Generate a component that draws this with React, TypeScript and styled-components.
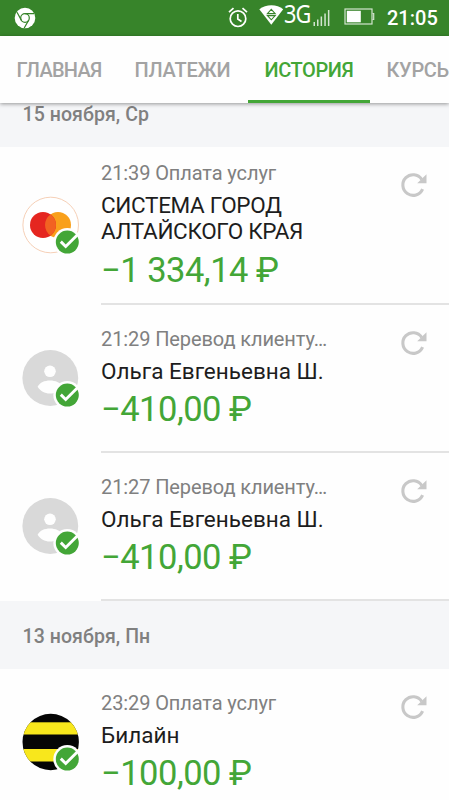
import React from "react";
import styled, { createGlobalStyle } from "styled-components";

const GlobalStyle = createGlobalStyle`
  * { box-sizing: border-box; }
  html, body { margin: 0; padding: 0; background: #fefefe; }
  body { font-family: Roboto, "Noto Sans", sans-serif; }
`;

const Screen = styled.div`
  width: 449px;
  height: 800px;
  overflow: hidden;
  display: flex;
  flex-direction: column;
  background: #fefefe;
`;

const StatusBar = styled.header`
  flex: none;
  height: 35.5px;
  background: #37842a;
  color: #fff;
  display: flex;
  align-items: flex-start;
  padding-left: 14px;
  svg { display: block; flex: none; }
`;

const StatusIcon = styled.span<{ $top: number; $left?: number }>`
  margin-top: ${(p) => p.$top}px;
  margin-left: ${(p) => p.$left ?? 0}px;
`;

const Spacer = styled.span`
  flex: 1;
`;

const NetworkLabel = styled.span`
  width: 31px;
  margin: -4px -3px 0 0;
  font: 400 25px/35px "Noto Sans", "Open Sans", sans-serif;
  letter-spacing: -1px;
  white-space: nowrap;
  transform: scaleX(0.87);
  transform-origin: left center;
`;

const Clock = styled.span`
  width: 62px;
  margin-top: 6px;
  font-size: 20px;
  line-height: 25px;
  font-weight: 500;
  letter-spacing: 0;
`;

const Tabs = styled.nav`
  flex: none;
  position: relative;
  z-index: 1;
  height: 67.5px;
  background: #fefefe;
  box-shadow: 0 1px 4px rgba(0, 0, 0, 0.4);
  display: flex;
  white-space: nowrap;
`;

const Tab = styled.a<{ $active?: boolean; $width: number; $spacing?: number }>`
  flex: none;
  width: ${(p) => p.$width}px;
  padding: 21px 0 0 16.5px;
  font-size: 20px;
  line-height: 26px;
  font-weight: 500;
  letter-spacing: ${(p) => p.$spacing ?? 0}px;
  color: ${(p) => (p.$active ? "#43a637" : "#a3a3a3")};
  border-bottom: 3px solid ${(p) => (p.$active ? "#43a637" : "transparent")};
`;

const TabStrip = styled.div`
  display: flex;
  width: 449px;
  overflow: hidden;
`;

const DateHeader = styled.h2<{ $clipped?: boolean }>`
  flex: none;
  margin: ${(p) => (p.$clipped ? "-24px" : "0")} 0 0;
  height: 68px;
  padding-left: 22.5px;
  background: #f5f6f8;
  color: #808080;
  font-size: 19.5px;
  line-height: 71px;
  letter-spacing: 0.08px;
  font-weight: 500;
`;

const Row = styled.article<{ $tall?: boolean }>`
  flex: none;
  height: ${(p) => (p.$tall ? 158 : 148)}px;
  display: flex;
`;

const IconCell = styled.div`
  width: 101px;
  padding: 0 0 2px 22px;
  display: flex;
  align-items: center;
  svg { display: block; overflow: visible; }
`;

const Details = styled.div<{ $tall?: boolean; $line: boolean }>`
  flex: 1;
  display: flex;
  padding-top: ${(p) => (p.$tall ? 13 : 21)}px;
  border-bottom: 2px solid ${(p) => (p.$line ? "#e3e3e3" : "transparent")};
`;

const Copy = styled.div`
  width: 292px;
  white-space: nowrap;
`;

const Meta = styled.div`
  font-size: 20px;
  line-height: 26px;
  letter-spacing: -0.1px;
  color: #808080;
`;

const Name = styled.div<{ $tall?: boolean }>`
  margin-top: 6px;
  font-size: 22.5px;
  line-height: 26.4px;
  letter-spacing: ${(p) => (p.$tall ? -0.33 : 0)}px;
  color: #1d1d1d;
  white-space: pre-line;
`;

const Amount = styled.div`
  margin-top: 3px;
  font-size: 34.5px;
  line-height: 44px;
  letter-spacing: -0.5px;
  color: #43a637;
`;

const Repeat = styled.button<{ $tall?: boolean }>`
  width: 40px;
  height: 40px;
  margin-top: ${(p) => (p.$tall ? 6 : -2)}px;
  padding: 5px 7px;
  border: 0;
  background: none;
  svg { display: block; }
`;

function RepeatIcon() {
  return (
    <svg width="28" height="28" viewBox="0 0 28 28" fill="none">
      <path d="M21.7 7.3A10.3 10.3 0 1 0 22.6 17.1" stroke="#c8c8c8" strokeWidth="3.1" />
      <path d="M26.5 2.2V11.2H17.2z" fill="#c8c8c8" />
    </svg>
  );
}

type LogoKind = "mastercard" | "person" | "beeline";

function Logo({ kind }: { kind: LogoKind }) {
  return (
    <svg width="58" height="58" viewBox="0 0 58 58">
      {kind === "mastercard" && (
        <>
          <circle cx="28.7" cy="29" r="27.8" fill="#fff" stroke="#f6d0b7" strokeWidth="1" />
          <circle cx="36" cy="29" r="13" fill="#f9a01b" />
          <circle cx="21" cy="29" r="13" fill="#e52620" />
          <path d="M28.5 18.4a13 13 0 0 1 0 21.2a13 13 0 0 1 0-21.2z" fill="#f26222" />
        </>
      )}
      {kind === "person" && (
        <>
          <circle cx="28.3" cy="29" r="27.9" fill="#d9d9d9" />
          <circle cx="28" cy="22.3" r="5.8" fill="#fefefe" />
          <path d="M15.6 37.7C18 33.6 22.5 31.6 28 31.6s10 2 12.4 6.1c-2.6 4.2-7 6.8-12.4 6.8s-9.8-2.6-12.4-6.8z" fill="#fefefe" />
        </>
      )}
      {kind === "beeline" && (
        <>
          <clipPath id="beelineClip"><circle cx="28.7" cy="29" r="28.2" /></clipPath>
          <g clipPath="url(#beelineClip)">
            <rect width="58" height="58" fill="#050505" />
            <rect y="9.3" width="58" height="12.2" fill="#f8e71c" />
            <rect y="36" width="58" height="12.5" fill="#f8e71c" />
          </g>
        </>
      )}
      <circle cx="45.3" cy="46.1" r="14" fill="#fefefe" />
      <circle cx="45.3" cy="46.1" r="11.5" fill="#43a637" />
      <path d="M38.8 45.6l4.9 4.9L56 38.2" fill="none" stroke="#fff" strokeWidth="2.9" />
    </svg>
  );
}

interface Operation {
  kind: LogoKind;
  meta: string;
  name: string;
  amount: string;
  tall?: boolean;
  line?: boolean;
}

function OperationRow({ kind, meta, name, amount, tall, line = true }: Operation) {
  return (
    <Row $tall={tall}>
      <IconCell><Logo kind={kind} /></IconCell>
      <Details $tall={tall} $line={line}>
        <Copy>
          <Meta>{meta}</Meta>
          <Name $tall={tall}>{name}</Name>
          <Amount>{amount}</Amount>
        </Copy>
        <Repeat $tall={tall} aria-label="Повторить"><RepeatIcon /></Repeat>
      </Details>
    </Row>
  );
}

function ChromeIcon() {
  return (
    <svg width="22" height="22" viewBox="0 0 22 22">
      <circle cx="11" cy="11" r="10.3" fill="#fff" />
      <g fill="none" stroke="#37842a" strokeWidth="1.2">
        <circle cx="11" cy="11" r="4.3" />
        <path d="M11 6.7H20M7.3 13.1L3 5.2M14.7 13.1L10.2 21" />
      </g>
    </svg>
  );
}

function AlarmIcon() {
  return (
    <svg width="20" height="21" viewBox="0 0 20 21" fill="none" stroke="#fff" strokeWidth="1.7">
      <circle cx="10" cy="11.7" r="7.8" />
      <path d="M9.8 7v5l3.7 2.5M1 5.2L5.5 1.2M19 5.2l-4.5-4" />
    </svg>
  );
}

function WifiIcon() {
  return (
    <svg width="25" height="20" viewBox="0 0 25 20">
      <path d="M.3 4.3C7-1 18-1 24.2 4.3L12.3 19.7z" fill="#fff" />
      <path d="M12.3 4.3l3.9 4.3H8.4zM8.4 10.6h7.8l-3.9 4.2z" fill="none" stroke="#37842a" strokeWidth="1.1" />
    </svg>
  );
}

function SignalIcon() {
  return (
    <svg width="18" height="18" viewBox="0 0 18 18" fill="#d3e4d0">
      <rect x="0.5" y="13" width="1.5" height="4" />
      <rect x="4" y="10.5" width="1.5" height="6.5" />
      <rect x="7.6" y="7.5" width="1.5" height="9.5" />
      <rect x="11.3" y="4.5" width="1.5" height="12.5" />
      <rect x="14.9" y="1" width="1.5" height="16" />
    </svg>
  );
}

function BatteryIcon() {
  return (
    <svg width="31" height="18" viewBox="0 0 31 18">
      <rect x="1" y="1" width="27" height="15" fill="none" stroke="#d3e4d0" strokeWidth="1.2" />
      <rect x="2.8" y="2.8" width="14" height="11.5" fill="#fff" />
      <path d="M28.5 5.5h1.2v6h-1.2" fill="none" stroke="#d3e4d0" strokeWidth="1.2" />
    </svg>
  );
}

export default function App() {
  return (
    <>
      <GlobalStyle />
      <Screen>
        <StatusBar>
          <StatusIcon $top={7}><ChromeIcon /></StatusIcon>
          <Spacer />
          <StatusIcon $top={7}><AlarmIcon /></StatusIcon>
          <StatusIcon $top={5} $left={11}><WifiIcon /></StatusIcon>
          <NetworkLabel>3G</NetworkLabel>
          <StatusIcon $top={8.5} $left={1}><SignalIcon /></StatusIcon>
          <StatusIcon $top={8} $left={13}><BatteryIcon /></StatusIcon>
          <StatusIcon $top={0} $left={12} />
          <Clock>21:05</Clock>
        </StatusBar>
        <Tabs>
          <TabStrip>
            <Tab $width={118} $spacing={-0.75}>ГЛАВНАЯ</Tab>
            <Tab $width={130} $spacing={-0.2}>ПЛАТЕЖИ</Tab>
            <Tab $width={122} $spacing={-0.4} $active>ИСТОРИЯ</Tab>
            <Tab $width={110} $spacing={-0.3}>КУРСЫ</Tab>
          </TabStrip>
        </Tabs>
        <DateHeader $clipped>15 ноября, Ср</DateHeader>
        <OperationRow kind="mastercard" tall meta="21:39 Оплата услуг" name={"СИСТЕМА ГОРОД\nАЛТАЙСКОГО КРАЯ"} amount="−1 334,14 ₽" />
        <OperationRow kind="person" meta="21:29 Перевод клиенту…" name="Ольга Евгеньевна Ш." amount="−410,00 ₽" />
        <OperationRow kind="person" meta="21:27 Перевод клиенту…" name="Ольга Евгеньевна Ш." amount="−410,00 ₽" />
        <DateHeader>13 ноября, Пн</DateHeader>
        <OperationRow kind="beeline" meta="23:29 Оплата услуг" name="Билайн" amount="−100,00 ₽" line={false} />
      </Screen>
    </>
  );
}
